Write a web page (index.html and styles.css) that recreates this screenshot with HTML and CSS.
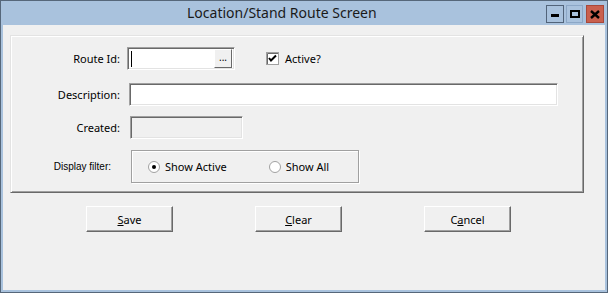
FILE: index.html
```html
<!DOCTYPE html>
<html lang="en">
<head>
    <meta charset="UTF-8">
    <title>Location/Stand Route Screen</title>
    <link rel="stylesheet" href="styles.css">
</head>
<body>
    <div class="window">
        <div class="titlebar">
            <div class="title">Location/Stand Route Screen</div>
            <div class="controls">
                <div class="ctl ctl-min"><span class="min-bar"></span></div>
                <div class="ctl ctl-max"><span class="max-box"></span></div>
                <div class="ctl ctl-close">
                    <svg width="10" height="9" viewBox="0 0 10 9">
                        <path d="M1 1 L9 8 M9 1 L1 8" stroke="#000" stroke-width="2.4" fill="none"/>
                    </svg>
                </div>
            </div>
        </div>

        <div class="client">
            <div class="panel">
                <div class="row row-route">
                    <label class="lbl">Route Id:</label>
                    <div class="field field-route">
                        <span class="caret"></span>
                        <span class="lookup">...</span>
                    </div>
                    <div class="check">
                        <svg width="13" height="13" viewBox="0 0 13 13">
                            <rect x="0.5" y="0.5" width="12" height="12" fill="#fff" stroke="#a0a0a0"/>
                            <path d="M1.5 12 V1.5 H12" stroke="#696969" fill="none"/>
                            <path d="M3 6 L5 8.5 L10 3.5" stroke="#000" stroke-width="2" fill="none"/>
                        </svg>
                        <span>Active?</span>
                    </div>
                </div>

                <div class="row row-desc">
                    <label class="lbl">Description:</label>
                    <div class="field field-desc"></div>
                </div>

                <div class="row row-created">
                    <label class="lbl">Created:</label>
                    <div class="field field-created"></div>
                </div>

                <div class="row row-filter">
                    <label class="lbl lbl-small">Display filter:</label>
                    <div class="groupbox">
                        <div class="radio">
                            <svg width="12" height="12" viewBox="0 0 12 12">
                                <circle cx="6" cy="6" r="5.5" fill="#fff" stroke="#a0a0a0"/>
                                <circle cx="6" cy="6" r="2" fill="#000"/>
                            </svg>
                            <span>Show Active</span>
                        </div>
                        <div class="radio radio-all">
                            <svg width="12" height="12" viewBox="0 0 12 12">
                                <circle cx="6" cy="6" r="5.5" fill="#fff" stroke="#a0a0a0"/>
                            </svg>
                            <span>Show All</span>
                        </div>
                    </div>
                </div>
            </div>

            <div class="buttons">
                <button class="btn"><u>S</u>ave</button>
                <button class="btn"><u>C</u>lear</button>
                <button class="btn">C<u>a</u>ncel</button>
            </div>
        </div>
    </div>
</body>
</html>
```

FILE: styles.css
```css
body {
    margin: 0;
    font-family: "Noto Sans", "Open Sans", sans-serif;
    font-size: 11px;
    color: #000;
}

.window {
    width: 608px;
    height: 293px;
    box-sizing: border-box;
    border: 1px solid #56677a;
    background-color: #a9c2dd;
    display: flex;
    flex-direction: column;
}

.titlebar {
    height: 24px;
    display: flex;
    align-items: center;
    padding-left: 186px;
    padding-right: 3px;
}

.title {
    flex: 1;
    font-size: 14px;
    color: #1a1a1a;
    margin-top: -2px;
}

.controls {
    display: flex;
    align-items: flex-start;
    height: 24px;
    padding-top: 4px;
    box-sizing: border-box;
}

.ctl {
    width: 18px;
    height: 18px;
    box-sizing: border-box;
    border: 1px solid #52647a;
    display: flex;
    align-items: center;
    justify-content: center;
}

.ctl-min {
    align-items: flex-end;
    padding-bottom: 5px;
}

.min-bar {
    width: 8px;
    height: 3px;
    background-color: #000;
}

.ctl-max {
    width: 17px;
    margin-left: 2px;
    border-color: #8ca7c6;
}

.max-box {
    width: 6px;
    height: 4px;
    border: 2px solid #000;
}

.ctl-close {
    margin-left: 3px;
    background-color: #c9604e;
    border-color: #a8483a;
}

.client {
    flex: 1;
    margin: 0 2px 2px;
    background-color: #f0f0f0;
    padding-top: 10px;
}

.panel {
    width: 574px;
    height: 158px;
    margin-left: 7px;
    box-sizing: border-box;
    border: 1px solid;
    border-color: #e3e3e3 #696969 #696969 #e3e3e3;
    box-shadow: inset 1px 1px #fff, inset -1px -1px #a0a0a0;
    padding-top: 11px;
}

.row {
    display: flex;
    align-items: center;
}

.row-desc {
    margin-top: 13px;
}

.row-created {
    margin-top: 10px;
}

.row-filter {
    margin-top: 11px;
}

.lbl {
    width: 109px;
    text-align: right;
    flex-shrink: 0;
}

.lbl-small {
    font-family: "Liberation Sans", Arial, sans-serif;
    font-size: 10px;
    box-sizing: border-box;
    padding-right: 9px;
    margin-top: -1px;
}

.field {
    height: 23px;
    box-sizing: border-box;
    border: 1px solid;
    border-color: #a0a0a0 #fff #fff #a0a0a0;
    box-shadow: inset 1px 1px #696969, inset -1px -1px #e3e3e3;
    background-color: #fff;
}

.field-route {
    width: 108px;
    margin-left: 7px;
    display: flex;
    justify-content: space-between;
    align-items: center;
    padding: 2px 2px 2px 3px;
}

.caret {
    width: 1px;
    height: 16px;
    background-color: #000;
}

.lookup {
    width: 18px;
    height: 19px;
    box-sizing: border-box;
    background-color: #f0f0f0;
    border: 1px solid;
    border-color: #fff #696969 #696969 #fff;
    font-size: 10px;
    line-height: 15px;
    text-align: center;
}

.field-desc {
    width: 429px;
    margin-left: 9px;
}

.field-created {
    width: 113px;
    margin-left: 10px;
    background-color: #f0f0f0;
}

.check {
    display: flex;
    align-items: center;
    gap: 6px;
    margin-left: 31px;
}

.groupbox {
    width: 228px;
    height: 33px;
    margin-left: 11px;
    box-sizing: border-box;
    border: 1px solid #a0a0a0;
    box-shadow: inset 1px 1px #fff, 1px 1px #fff;
    display: flex;
    align-items: center;
    padding-left: 16px;
}

.radio {
    display: flex;
    align-items: center;
    gap: 5px;
}

.radio-all {
    margin-left: 42px;
}

.buttons {
    display: flex;
    gap: 82px;
    padding-left: 83px;
    margin-top: 13px;
}

.btn {
    width: 87px;
    height: 26px;
    box-sizing: border-box;
    background-color: #f0f0f0;
    border: 1px solid;
    border-color: #fff #696969 #696969 #fff;
    box-shadow: inset -1px -1px #a0a0a0;
    font-family: "Noto Sans", "Open Sans", sans-serif;
    font-size: 11px;
    color: #000;
    padding: 0;
}
```
